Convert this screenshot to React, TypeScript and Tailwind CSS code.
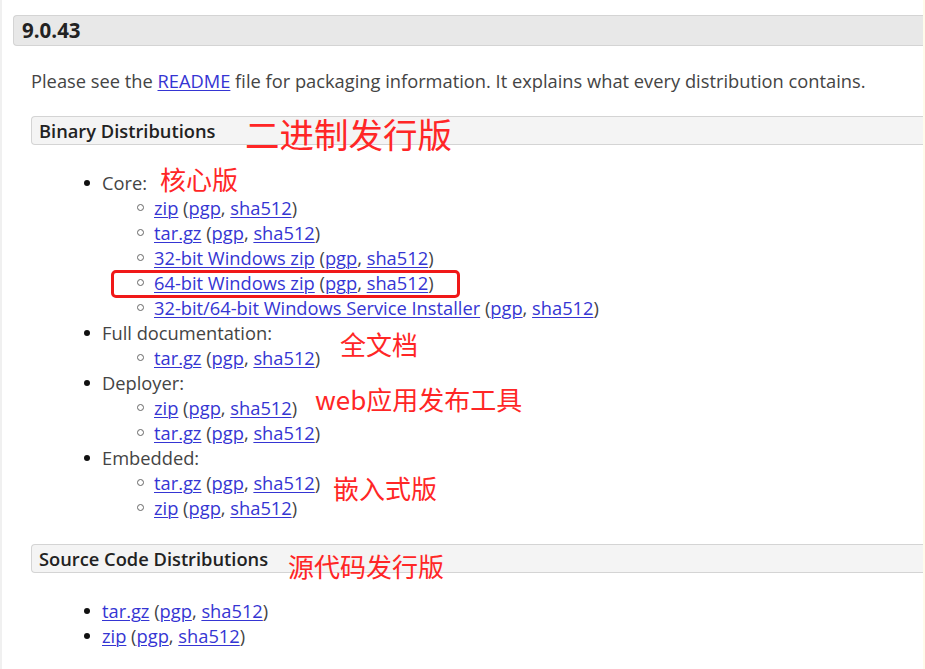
import React from "react";

const font = { fontFamily: '"Open Sans", "Noto Sans", sans-serif' };

function L({ children }: { children: React.ReactNode }) {
  return <a className="text-[#3535d3] underline underline-offset-[2px] decoration-[1px]">{children}</a>;
}

function Dl({ name }: { name: string }) {
  return (
    <>
      <L>{name}</L> (<L>pgp</L>, <L>sha512</L>)
    </>
  );
}

function Disc() {
  return (
    <span className="w-[71px] shrink-0 flex justify-end pr-[12px]">
      <span className="w-[6px] h-[6px] rounded-full bg-[#111]" />
    </span>
  );
}

function Circ() {
  return (
    <span className="w-[52px] shrink-0 flex justify-end pr-[10px]">
      <span className="w-[7px] h-[7px] rounded-full border-[1.5px] border-[#666]" />
    </span>
  );
}

function Row({ level, children }: { level: 1 | 2; children: React.ReactNode }) {
  return (
    <li className={`flex items-center h-[25px] ${level === 2 ? "pl-[71px]" : ""}`}>
      {level === 1 ? <Disc /> : <Circ />}
      <span className="whitespace-nowrap">{children}</span>
    </li>
  );
}

function Bar({ children, big }: { children: React.ReactNode; big?: boolean }) {
  return (
    <div
      className={`${big ? "h-[31px] bg-[#e8e8e8] text-[20.5px] font-bold pl-[8px]" : "h-[29px] bg-[#f4f4f4] text-[18.3px] font-semibold pl-[7px]"} border border-r-0 border-[#d4d4d4] rounded-l-[4px] flex items-center text-[#222] whitespace-nowrap`}
    >
      {children}
    </div>
  );
}

function Note({ children, cls }: { children: React.ReactNode; cls: string }) {
  return (
    <span
      className={`absolute text-[#ff2626] whitespace-nowrap leading-none ${cls}`}
      style={{ fontFamily: '"Noto Sans CJK SC", "Noto Sans", sans-serif' }}
    >
      {children}
    </span>
  );
}

export default function App() {
  return (
    <div className="w-[925px] h-[669px] overflow-hidden bg-white flex relative" style={font}>
      <div className="w-[923px] border-l-2 border-[#f0f0f0] pt-[15px] pl-[11px] text-[18.3px] text-[#444]">
        <Bar big>9.0.43</Bar>
        <div className="pl-[18px]">
          <p className="mt-[22px] leading-[25px] h-[25px] whitespace-nowrap">
            Please see the <L>README</L> file for packaging information. It explains what every distribution contains.
          </p>
          <div className="mt-[23px]">
            <Bar>Binary Distributions</Bar>
          </div>
          <ul className="mt-[25px] leading-[25px]">
            <Row level={1}>Core:</Row>
            <Row level={2}><Dl name="zip" /></Row>
            <Row level={2}><Dl name="tar.gz" /></Row>
            <Row level={2}><Dl name="32-bit Windows zip" /></Row>
            <Row level={2}><Dl name="64-bit Windows zip" /></Row>
            <Row level={2}><Dl name="32-bit/64-bit Windows Service Installer" /></Row>
            <Row level={1}>Full documentation:</Row>
            <Row level={2}><Dl name="tar.gz" /></Row>
            <Row level={1}>Deployer:</Row>
            <Row level={2}><Dl name="zip" /></Row>
            <Row level={2}><Dl name="tar.gz" /></Row>
            <Row level={1}>Embedded:</Row>
            <Row level={2}><Dl name="tar.gz" /></Row>
            <Row level={2}><Dl name="zip" /></Row>
          </ul>
          <div className="mt-[24px]">
            <Bar>Source Code Distributions</Bar>
          </div>
          <ul className="mt-[25px] leading-[25px]">
            <Row level={1}><Dl name="tar.gz" /></Row>
            <Row level={1}><Dl name="zip" /></Row>
          </ul>
        </div>
      </div>
      <div className="w-[2px] bg-[#fffbea]" />

      <div className="absolute left-[111px] top-[270px] w-[349px] h-[28px] border-[3px] border-[#f01818] rounded-[5px]" />

      <Note cls="left-[245px] top-[116px] text-[34.5px]">二进制发行版</Note>
      <Note cls="left-[160px] top-[166px] text-[26px]">核心版</Note>
      <Note cls="left-[340px] top-[331px] text-[26px]">全文档</Note>
      <Note cls="left-[315px] top-[386px] text-[26px]">web应用发布工具</Note>
      <Note cls="left-[333px] top-[475px] text-[26px]">嵌入式版</Note>
      <Note cls="left-[288px] top-[553px] text-[26px]">源代码发行版</Note>
    </div>
  );
}
